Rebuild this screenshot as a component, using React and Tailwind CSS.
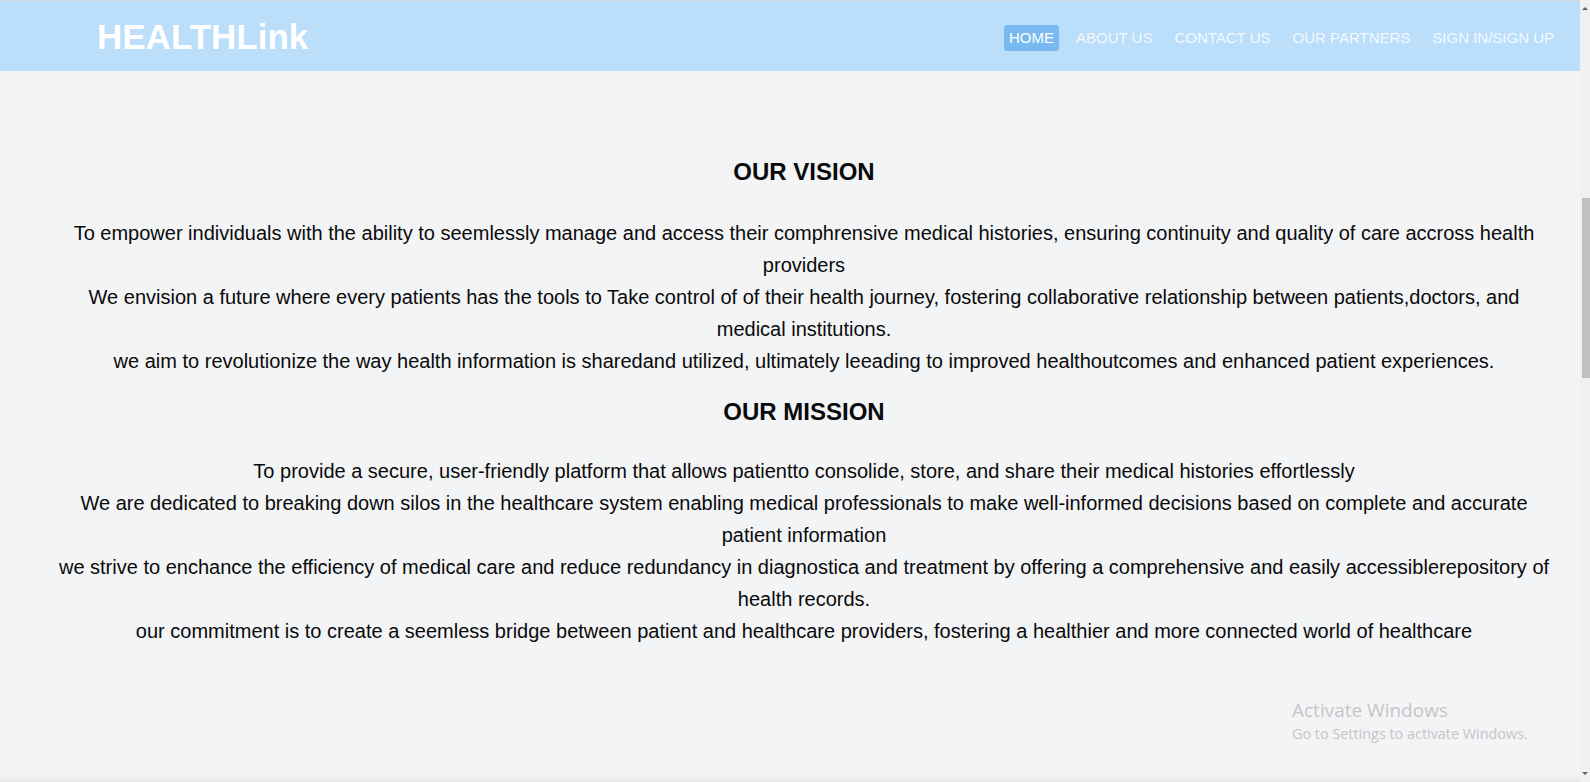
import React from "react";

const navItems = ["HOME", "ABOUT US", "CONTACT US", "OUR PARTNERS", "SIGN IN/SIGN UP"];

const vision = [
  "To empower individuals with the ability to seemlessly manage and access their comphrensive medical histories, ensuring continuity and quality of care accross health providers",
  "We envision a future where every patients has the tools to Take control of of their health journey, fostering collaborative relationship between patients,doctors, and medical institutions.",
  "we aim to revolutionize the way health information is sharedand utilized, ultimately leeading to improved healthoutcomes and enhanced patient experiences.",
];

const mission = [
  "To provide a secure, user-friendly platform that allows patientto consolide, store, and share their medical histories effortlessly",
  "We are dedicated to breaking down silos in the healthcare system enabling medical professionals to make well-informed decisions based on complete and accurate patient information",
  "we strive to enchance the efficiency of medical care and reduce redundancy in diagnostica and treatment by offering a comprehensive and easily accessiblerepository of health records.",
  "our commitment is to create a seemless bridge between patient and healthcare providers, fostering a healthier and more connected world of healthcare",
];

export default function App() {
  return (
    <div className="flex h-[782px] w-[1590px] overflow-hidden font-['Liberation_Sans',Arial,sans-serif]">
      <div className="relative w-[1580px] h-full bg-[#f3f4f6]">
        <header className="h-[71px] border-t border-[#d3d6d9] bg-[#bbdefa] flex items-center justify-between pl-[97px] pr-[21px]">
          <div className="text-[35px] font-bold text-white leading-none">HEALTHLink</div>
          <nav className="flex items-center gap-[12px] mt-[4px]">
            {navItems.map((item, i) => (
              <div
                key={item}
                className={
                  i === 0
                    ? "h-[26px] flex items-center px-[5px] rounded-[3px] bg-[#78baf0] text-[15px] text-white"
                    : "h-[26px] flex items-center px-[5px] text-[15px] text-[#f4f9ff]"
                }
              >
                {item}
              </div>
            ))}
          </nav>
        </header>

        <main className="pl-[54px] pr-[26px] text-center text-[#0a0a0a]">
          <h2 className="mt-[87px] text-[24px] font-bold leading-[28px]">OUR VISION</h2>
          <div className="mt-[31px] text-[20px] leading-[32px]">
            {vision.map((t) => (
              <p key={t}>{t}</p>
            ))}
          </div>
          <h2 className="mt-[21px] text-[24px] font-bold leading-[28px]">OUR MISSION</h2>
          <div className="mt-[29px] text-[20px] leading-[32px]">
            {mission.map((t) => (
              <p key={t}>{t}</p>
            ))}
          </div>
        </main>

        <div className="absolute left-[1292px] top-[697px] font-['Open_Sans','Noto_Sans',sans-serif] text-[#c4c5c7]">
          <div className="text-[19px] leading-[26px]">Activate Windows</div>
          <div className="text-[14.4px] leading-[20px] mt-[1px]">Go to Settings to activate Windows.</div>
        </div>

        <div className="absolute left-0 right-0 bottom-0 h-[8px] bg-gradient-to-b from-[#f3f4f6] to-[#e5e6e8]"></div>
      </div>

      <div className="w-[10px] h-full bg-[#f0f0f0] flex flex-col items-center">
        <div className="mt-[7px] w-0 h-0 border-l-[3px] border-r-[3px] border-b-[3px] border-l-transparent border-r-transparent border-b-[#606060]"></div>
        <div className="mt-[188px] ml-[2px] w-[8px] h-[180px] bg-[#c1c1c1]"></div>
        <div className="flex-1"></div>
        <div className="mb-[7px] w-0 h-0 border-l-[3px] border-r-[3px] border-t-[3px] border-l-transparent border-r-transparent border-t-[#606060]"></div>
      </div>
    </div>
  );
}
